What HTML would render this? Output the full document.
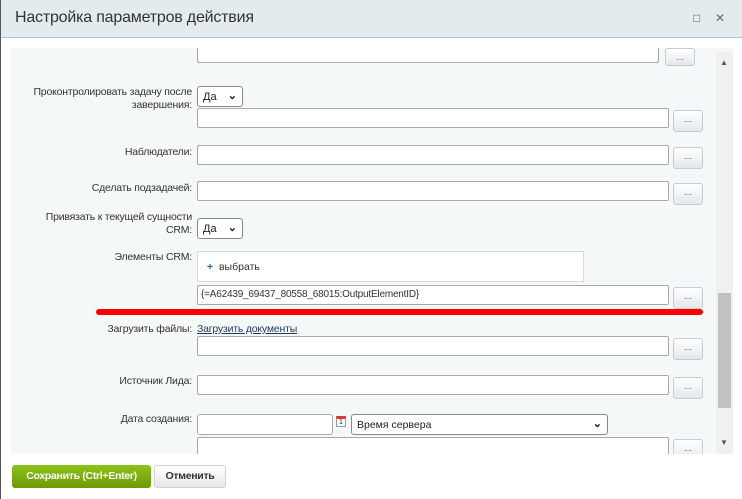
<!DOCTYPE html>
<html><head><meta charset="utf-8"><style>
*{box-sizing:border-box;margin:0;padding:0}
body{width:742px;height:499px;overflow:hidden;background:#fff;font-family:"Liberation Sans",sans-serif;position:relative;border-left:1px solid #555}
.hdr{position:absolute;left:0;top:0;width:741px;height:38px;background:#e4ebef;border-bottom:1px solid #b9c2c7}
.hdr .t{position:absolute;left:14px;top:9px;font-size:16px;color:#333;letter-spacing:-0.2px}
.hdr .i{position:absolute;top:11px;font-size:12px;color:#666}
.panel{position:absolute;left:10px;top:48px;width:722px;height:406px;background:#f5f8f9;overflow:hidden}
.sb{position:absolute;left:705px;top:4px;width:17px;height:402px;background:#f0f0f0}
.thumb{position:absolute;left:2px;top:241px;width:13px;height:115px;background:#c1c1c1}
.ar{position:absolute;left:4px;font-size:8px;color:#555}
.a{position:absolute}
.lbl{position:absolute;right:541px;font-size:10.5px;color:#333;text-align:right;line-height:13px;letter-spacing:-0.2px}
.ta{position:absolute;left:186px;width:472px;height:20px;background:#fff;border:1px solid #a9a9a9;border-radius:2px}
.btn{position:absolute;left:662px;width:30px;height:22px;border:1px solid #c6cdd1;border-radius:3px;background:linear-gradient(#fff,#e3e8ea);font-size:9px;color:#555;text-align:center;line-height:16px}
.sel{position:absolute;left:186px;height:21px;background:#fff;border:1px solid #888;border-radius:3px;font-size:11px;padding:4px 5px;color:#222}
.sel b{position:absolute;right:5px;top:2px;font-size:11px}
</style></head><body>
<div class="hdr"><div class="t">Настройка параметров действия</div><div class="i" style="left:692px">□</div><div class="i" style="left:714px">✕</div></div>
<div class="panel">
<div class="ta" style="top:-5px;width:462px"></div><div class="btn" style="left:654px;top:0px;height:18px">...</div>
<div class="lbl" style="top:38px">Проконтролировать задачу после<br>завершения:</div>
<div class="sel" style="top:38px;width:46px">Да<b>⌄</b></div>
<div class="ta" style="top:60px"></div><div class="btn" style="top:62px">...</div>
<div class="lbl" style="top:98px">Наблюдатели:</div>
<div class="ta" style="top:97px"></div><div class="btn" style="top:99px">...</div>
<div class="lbl" style="top:134px">Сделать подзадачей:</div>
<div class="ta" style="top:133px"></div><div class="btn" style="top:135px">...</div>
<div class="lbl" style="top:163px">Привязать к текущей сущности<br>CRM:</div>
<div class="sel" style="top:170px;width:46px">Да<b>⌄</b></div>
<div class="lbl" style="top:203px">Элементы CRM:</div>
<div class="a" style="left:186px;top:203px;width:387px;height:31px;background:#fff;border:1px solid #d5dadd;font-size:10.5px;padding:9px 9px;color:#333"><span style="color:#2067b0;font-weight:bold">+</span>&nbsp; выбрать</div>
<div class="ta" style="top:237px;font-size:10px;padding:3px 3px;color:#333;letter-spacing:-0.2px">{=A62439_69437_80558_68015:OutputElementID}</div><div class="btn" style="top:239px">...</div>
<div class="a" style="left:85px;top:261px;width:607px;height:6px;background:#f00;border-radius:3px"></div>
<div class="lbl" style="top:275px">Загрузить файлы:</div>
<div class="a" style="left:186px;top:275px;font-size:10.5px;color:#1f3a5a;text-decoration:underline;line-height:13px;letter-spacing:-0.2px">Загрузить документы</div>
<div class="ta" style="top:288px"></div><div class="btn" style="top:290px">...</div>
<div class="lbl" style="top:327px">Источник Лида:</div>
<div class="ta" style="top:327px"></div><div class="btn" style="top:329px">...</div>
<div class="lbl" style="top:365px">Дата создания:</div>
<div class="a" style="left:186px;top:366px;width:136px;height:21px;background:#fff;border:1px solid #a9a9a9;border-radius:3px"></div>
<div class="a" style="left:325px;top:368px;width:10px;height:11px;background:#fff;border:1px solid #999;border-top:3px solid #d33;font-size:7px;text-align:center;color:#225;line-height:7px">1</div>
<div class="sel" style="top:366px;left:340px;width:257px;font-size:10.5px">Время сервера<b>⌄</b></div>
<div class="ta" style="top:389px"></div><div class="btn" style="top:391px">...</div>
<div class="sb"><div class="ar" style="top:6px">▲</div><div class="thumb"></div><div class="ar" style="top:386px">▼</div></div>
</div>
<div class="a" style="left:11px;top:465px;width:139px;height:23px;background:linear-gradient(#8fc219,#6b9a06);border-radius:3px;color:#fff;font-size:10.5px;font-weight:bold;text-align:center;line-height:23px;letter-spacing:-0.3px">Сохранить (Ctrl+Enter)</div>
<div class="a" style="left:153px;top:465px;width:72px;height:23px;background:linear-gradient(#fff,#e5e9eb);border:1px solid #cfd4d6;border-radius:3px;color:#333;font-size:10.5px;font-weight:bold;text-align:center;line-height:21px;letter-spacing:-0.3px">Отменить</div>
</body></html>
